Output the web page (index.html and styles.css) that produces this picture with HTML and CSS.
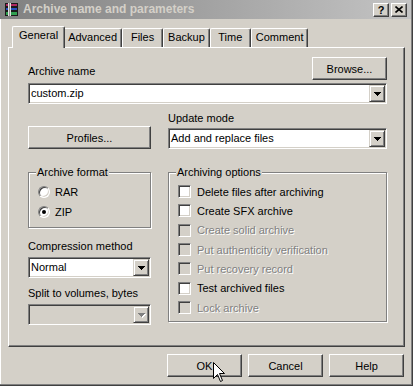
FILE: index.html
```html
<!DOCTYPE html>
<html lang="en">
<head>
    <meta charset="UTF-8">
    <title>Archive name and parameters</title>
    <link rel="stylesheet" href="styles.css">
</head>
<body>
<div class="window">
    <div class="titlebar">
        <svg class="app-icon" width="16" height="16" viewBox="0 0 16 16" shape-rendering="crispEdges">
            <rect x="1" y="1" width="13" height="4" fill="#1a1a1a"/>
            <rect x="2" y="2" width="11" height="2" fill="#b02860"/>
            <rect x="1" y="5" width="13" height="4" fill="#1a1a1a"/>
            <rect x="2" y="6" width="11" height="2" fill="#2850c0"/>
            <rect x="1" y="9" width="13" height="5" fill="#1a1a1a"/>
            <rect x="2" y="10" width="11" height="3" fill="#30a050"/>
            <rect x="4" y="1" width="3" height="13" fill="#e0e0e0"/>
            <rect x="5" y="1" width="1" height="13" fill="#909090"/>
        </svg>
        <span class="title">Archive name and parameters</span>
        <div class="caption-buttons">
            <span class="cap-btn">?</span>
            <span class="cap-btn">
                <svg width="8" height="7" viewBox="0 0 8 7"><path d="M0.5 0.5L7.5 6.5M7.5 0.5L0.5 6.5" stroke="#000" stroke-width="1.6"/></svg>
            </span>
        </div>
    </div>

    <div class="tabs">
        <div class="tab active">General</div>
        <div class="tab">Advanced</div>
        <div class="tab">Files</div>
        <div class="tab">Backup</div>
        <div class="tab">Time</div>
        <div class="tab">Comment</div>
    </div>

    <div class="panel">
        <div class="name-row">
            <span class="label">Archive name</span>
            <span class="btn">Browse...</span>
        </div>
        <div class="combo">
            <span class="combo-text">custom.zip</span>
            <span class="drop"><svg width="7" height="4" viewBox="0 0 7 4" shape-rendering="crispEdges"><path d="M0 0h7v1h-1v1h-1v1h-1v1h-1v-1h-1v-1h-1v-1h-1z"/></svg></span>
        </div>

        <div class="columns">
            <span class="btn profiles">Profiles...</span>
            <div class="field">
                <span class="label">Update mode</span>
                <div class="combo">
                    <span class="combo-text">Add and replace files</span>
                    <span class="drop"><svg width="7" height="4" viewBox="0 0 7 4" shape-rendering="crispEdges"><path d="M0 0h7v1h-1v1h-1v1h-1v1h-1v-1h-1v-1h-1v-1h-1z"/></svg></span>
                </div>
            </div>

            <div class="left-col">
                <fieldset class="group">
                    <legend>Archive format</legend>
                    <div class="option"><span class="radio"></span>RAR</div>
                    <div class="option"><span class="radio checked"></span>ZIP</div>
                </fieldset>
                <span class="label method">Compression method</span>
                <div class="combo">
                    <span class="combo-text">Normal</span>
                    <span class="drop"><svg width="7" height="4" viewBox="0 0 7 4" shape-rendering="crispEdges"><path d="M0 0h7v1h-1v1h-1v1h-1v1h-1v-1h-1v-1h-1v-1h-1z"/></svg></span>
                </div>
                <span class="label split">Split to volumes, bytes</span>
                <div class="combo disabled-combo">
                    <span class="combo-text"></span>
                    <span class="drop"><svg width="7" height="4" viewBox="0 0 7 4" shape-rendering="crispEdges"><path d="M0 0h7v1h-1v1h-1v1h-1v1h-1v-1h-1v-1h-1v-1h-1z"/></svg></span>
                </div>
            </div>

            <fieldset class="group options">
                <legend>Archiving options</legend>
                <div class="check-row"><span class="check"></span>Delete files after archiving</div>
                <div class="check-row"><span class="check"></span>Create SFX archive</div>
                <div class="check-row disabled"><span class="check"></span>Create solid archive</div>
                <div class="check-row disabled"><span class="check"></span>Put authenticity verification</div>
                <div class="check-row disabled"><span class="check"></span>Put recovery record</div>
                <div class="check-row"><span class="check"></span>Test archived files</div>
                <div class="check-row disabled"><span class="check"></span>Lock archive</div>
            </fieldset>
        </div>
    </div>

    <div class="footer">
        <span class="btn">OK</span>
        <span class="btn">Cancel</span>
        <span class="btn">Help</span>
    </div>

    <svg class="cursor" width="13" height="21" viewBox="0 0 13 21">
        <path d="M0.5 0.5V16.5L4.5 12.5L7.5 19.5L9.5 18.5L6.5 11.5H11.5Z" fill="#fff" stroke="#000" stroke-width="1"/>
    </svg>
</div>
</body>
</html>
```

FILE: styles.css
```css
body {
    margin: 0;
    font-family: "Liberation Sans", Arial, sans-serif;
    font-size: 11px;
    color: #000;
}
.window {
    position: relative;
    width: 413px;
    height: 386px;
    box-sizing: border-box;
    background: #d4d0c8;
    box-shadow: inset -1px -1px #404040, inset -2px -2px #808080, inset 1px 0 #fff;
    display: flex;
    flex-direction: column;
}

/* title bar */
.titlebar {
    height: 19px;
    margin-right: 2px;
    padding-left: 4px;
    display: flex;
    align-items: center;
    background: linear-gradient(to right, #808080, #c4c4c4);
}
.app-icon {
    margin-right: 3px;
}
.title {
    font-weight: bold;
    font-size: 12px;
    color: #d4d0c8;
    line-height: 13px;
}
.caption-buttons {
    margin-left: auto;
    margin-right: 4px;
    display: flex;
    gap: 2px;
}
.cap-btn {
    width: 16px;
    height: 14px;
    box-sizing: border-box;
    display: flex;
    align-items: center;
    justify-content: center;
    background: #d4d0c8;
    border: 1px solid;
    border-color: #fff #404040 #404040 #fff;
    box-shadow: inset -1px -1px #808080;
    font-weight: bold;
    font-size: 11px;
    line-height: 12px;
}

/* tabs */
.tabs {
    display: flex;
    align-items: flex-end;
    padding: 7px 0 0 14px;
    position: relative;
    z-index: 1;
}
.tab {
    height: 19px;
    min-width: 41px;
    box-sizing: border-box;
    padding: 2px 4px 0;
    line-height: 13px;
    text-align: center;
    border: 1px solid;
    border-bottom: none;
    border-color: #fff #404040 #404040 #fff;
    border-radius: 2px 2px 0 0;
    box-shadow: inset -1px 0 #808080;
    background: #d4d0c8;
}
.tab.active {
    height: 22px;
    margin: 0 -2px -1px;
    padding: 2px 6px 0;
    position: relative;
    z-index: 2;
}

/* page panel */
.panel {
    height: 300px;
    margin: 0 8px;
    box-sizing: border-box;
    padding: 9px 17px 0 19px;
    border: 1px solid;
    border-color: #fff #404040 #404040 #fff;
    box-shadow: inset -1px -1px #808080;
}
.label {
    display: block;
    line-height: 13px;
}
.name-row {
    display: flex;
    justify-content: space-between;
    align-items: flex-end;
}
.name-row .label {
    margin-bottom: 2px;
}
.btn {
    display: flex;
    align-items: center;
    justify-content: center;
    width: 75px;
    height: 23px;
    box-sizing: border-box;
    background: #d4d0c8;
    border: 1px solid;
    border-color: #fff #404040 #404040 #fff;
    box-shadow: inset -1px -1px #808080;
}
.btn.profiles {
    width: 123px;
    align-self: end;
}

/* combo boxes */
.combo {
    display: flex;
    height: 21px;
    box-sizing: border-box;
    margin-top: 3px;
    padding: 1px;
    border: 1px solid;
    border-color: #808080 #fff #fff #808080;
    box-shadow: inset 1px 1px #404040, inset -1px -1px #d4d0c8;
    background: #fff;
}
.combo-text {
    flex: 1;
    padding-left: 1px;
    line-height: 17px;
    white-space: nowrap;
    overflow: hidden;
}
.drop {
    width: 16px;
    height: 17px;
    box-sizing: border-box;
    display: flex;
    align-items: center;
    justify-content: center;
    background: #d4d0c8;
    border: 1px solid;
    border-color: #d4d0c8 #404040 #404040 #d4d0c8;
    box-shadow: inset 1px 1px #fff, inset -1px -1px #808080;
}
.drop svg {
    fill: #000;
}
.disabled-combo {
    background: #d4d0c8;
}
.disabled-combo .drop svg {
    fill: #808080;
    filter: drop-shadow(1px 1px 0 #fff);
}

/* two columns */
.columns {
    display: grid;
    grid-template-columns: 123px 219px;
    column-gap: 17px;
    row-gap: 17px;
    margin-top: 8px;
}
.method {
    margin-top: 12px;
}
.left-col .combo {
    margin-top: 4px;
}
.split {
    margin-top: 9px;
}

/* group boxes */
.group {
    margin: 0;
    padding: 3px 7px 5px;
    min-width: 0;
    border: 1px solid #808080;
    box-shadow: inset 1px 1px #fff, 1px 1px #fff;
}
.group legend {
    padding: 0 1px;
    line-height: 13px;
    background: #d4d0c8;
}
.options {
    align-self: start;
    padding-bottom: 4px;
}
.option {
    display: flex;
    align-items: center;
    gap: 5px;
    height: 20px;
}
.radio {
    width: 12px;
    height: 12px;
    margin-left: 2px;
    box-sizing: border-box;
    border-radius: 50%;
    border: 1px solid;
    border-color: #808080 #fff #fff #808080;
    box-shadow: inset 1px 1px #404040, inset -1px -1px #d4d0c8;
    background: #fff;
    display: flex;
    align-items: center;
    justify-content: center;
}
.radio.checked::after {
    content: "";
    width: 4px;
    height: 4px;
    border-radius: 50%;
    background: #000;
}
.check-row {
    display: flex;
    align-items: center;
    gap: 6px;
    height: 19.33px;
}
.check {
    width: 13px;
    height: 13px;
    margin-left: 2px;
    box-sizing: border-box;
    border: 1px solid;
    border-color: #808080 #fff #fff #808080;
    box-shadow: inset 1px 1px #404040, inset -1px -1px #d4d0c8;
    background: #fff;
}
.disabled {
    color: #808080;
    text-shadow: 1px 1px 0 #fff;
}
.disabled .check {
    background: #d4d0c8;
}

/* bottom buttons */
.footer {
    display: flex;
    justify-content: flex-end;
    gap: 6px;
    padding: 7px 9px 0 0;
}

.cursor {
    position: absolute;
    left: 213px;
    top: 362px;
}
```
